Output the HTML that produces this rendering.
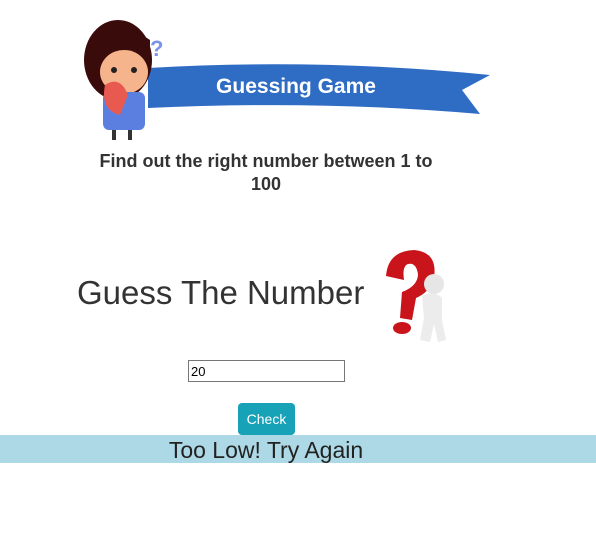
<!DOCTYPE html>
<html><head><style>
body{margin:0;width:596px;height:552px;background:#fff;font-family:"Liberation Sans",sans-serif;position:relative;overflow:hidden;color:#212529}
.a{position:absolute}
</style></head><body>
<svg class="a" style="left:0;top:0" width="596" height="140">
<path d="M148 68 Q320 58 490 75 L462 90 L480 114 Q320 100 148 108 Z" fill="#2f6cc4"/>
<text x="296" y="93" text-anchor="middle" font-family="Liberation Sans" font-weight="bold" font-size="21" fill="#fff">Guessing Game</text>
<text x="150" y="56" font-family="Liberation Sans" font-weight="bold" font-size="22" fill="#7b93e8">?</text>
<ellipse cx="118" cy="60" rx="34" ry="40" fill="#3a0b0b"/>
<ellipse cx="124" cy="72" rx="24" ry="22" fill="#f6b48c"/>
<path d="M92 55 Q110 30 150 58 L150 40 Q120 18 90 40Z" fill="#3a0b0b"/>
<circle cx="114" cy="70" r="3" fill="#222"/><circle cx="134" cy="70" r="3" fill="#222"/>
<rect x="103" y="92" width="42" height="38" rx="6" fill="#5b7fe0"/>
<path d="M105 85 Q120 75 128 95 L120 115 Q100 110 105 85Z" fill="#e85a50"/>
<rect x="112" y="130" width="4" height="10" fill="#333"/><rect x="128" y="130" width="4" height="10" fill="#333"/>
</svg>
<div class="a" style="left:86px;width:360px;top:150px;text-align:center;font-weight:bold;font-size:18px;line-height:23px;color:#333">Find out the right number between 1 to 100</div>
<div class="a" style="left:77px;top:274px;font-size:33px;color:#333">Guess The Number</div>
<svg class="a" style="left:376px;top:246px" width="76" height="100">
<path d="M10 30 Q12 5 38 4 Q62 6 58 32 Q54 46 40 52 L36 74 L24 72 L26 46 Q42 40 42 28 Q40 16 32 18 Q26 20 28 34 Z" fill="#c8141a"/>
<ellipse cx="26" cy="82" rx="9" ry="6" fill="#c8141a"/>
<circle cx="58" cy="38" r="10" fill="#e6e6e6"/>
<path d="M46 50 Q58 44 66 52 L66 74 L70 94 L62 96 L58 78 L54 96 L44 94 L48 72 Z" fill="#ececec"/>
</svg>
<input class="a" style="left:188px;top:360px;width:151px;height:18px;border:1px solid #767676;padding:1px 2px;font-size:13px;font-family:'Liberation Sans';margin:0" value="20">
<div class="a" style="left:238px;top:403px;width:57px;height:32px;background:#17a2b8;border-radius:4px;color:#fff;font-size:14px;line-height:32px;text-align:center">Check</div>
<div class="a" style="left:0;top:435px;width:596px;height:28px;background:#add8e6"></div>
<div class="a" style="left:0;width:532px;top:435px;text-align:center;font-size:23px;line-height:30px;color:#222">Too Low! Try Again</div>
</body></html>
